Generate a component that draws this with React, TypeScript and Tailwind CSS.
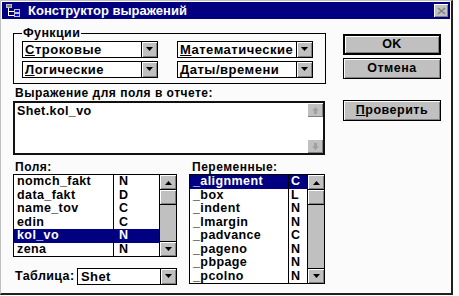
import React from "react";

const raised = "bg-[#c0c0c0] shadow-[inset_1px_1px_0_#ffffff,inset_-1px_-1px_0_#808080]";

function Down({ c = "#000" }: { c?: string }) {
  return (
    <svg width="9" height="5" viewBox="0 0 9 5"><path d="M1 0h7L4.5 4z" fill={c} /></svg>
  );
}
function Up({ c = "#000" }: { c?: string }) {
  return (
    <svg width="9" height="5" viewBox="0 0 9 5"><path d="M1 5h7L4.5 1z" fill={c} /></svg>
  );
}

function Combo({ u, rest, cls }: { u: string; rest: string; cls: string }) {
  return (
    <div className={`flex h-[17px] border border-black bg-white ${cls}`}>
      <div className="flex-1 pl-[2px] leading-[15px] text-[13px] font-bold tracking-[0.5px] text-black whitespace-nowrap overflow-hidden">
        <span className="underline">{u}</span>
        {rest}
      </div>
      <div className={`w-[16px] border-l border-black flex items-center justify-center ${raised}`}>
        <Down />
      </div>
    </div>
  );
}

function Btn({ children, cls }: { children: React.ReactNode; cls: string }) {
  return (
    <div className={`flex items-center justify-center border border-black text-[12.5px] font-bold tracking-[0.5px] text-black ${raised} ${cls}`}>
      {children}
    </div>
  );
}

type Row = [string, string];

function List({
  rows,
  sel,
  nameW,
  typeW,
  typePl,
  h,
}: {
  rows: Row[];
  sel: number;
  nameW: string;
  typeW: string;
  typePl: string;
  h: string;
}) {
  return (
    <div className={`flex border border-black bg-white ${h}`}>
      <div className={`${nameW} flex flex-col`}>
        {rows.map((r, i) => (
          <div
            key={i}
            className={`h-[13.5px] leading-[13.5px] pl-[3px] text-[12.5px] font-bold tracking-[0.4px] ${
              i === sel ? "bg-[#000080] text-white" : "text-black"
            }`}
          >
            {r[0]}
          </div>
        ))}
      </div>
      <div className={`${typeW} border-l border-black flex flex-col`}>
        {rows.map((r, i) => (
          <div
            key={i}
            className={`h-[13.5px] leading-[13.5px] ${typePl} text-[12.5px] font-bold ${
              i === sel ? "bg-[#000080] text-white" : "text-black"
            }`}
          >
            {r[1]}
          </div>
        ))}
      </div>
      <div className="w-[17px] border-l border-black bg-[#c0c0c0] flex flex-col">
        <div className={`h-[15px] flex items-center justify-center border-b border-black ${raised}`}>
          <Up />
        </div>
        <div className={`h-[15px] border-b border-black ${raised}`} />
        <div className="flex-1" />
        <div className={`h-[15px] flex items-center justify-center border-t border-black ${raised}`}>
          <Down />
        </div>
      </div>
    </div>
  );
}

export default function App() {
  const fields: Row[] = [
    ["nomch_fakt", "N"],
    ["data_fakt", "D"],
    ["name_tov", "C"],
    ["edin", "C"],
    ["kol_vo", "N"],
    ["zena", "N"],
  ];
  const vars: Row[] = [
    ["_alignment", "C"],
    ["_box", "L"],
    ["_indent", "N"],
    ["_lmargin", "N"],
    ["_padvance", "C"],
    ["_pageno", "N"],
    ["_pbpage", "N"],
    ["_pcolno", "N"],
  ];
  return (
    <div className="w-[459px] h-[296px] bg-white font-['Liberation_Sans',Arial,sans-serif]">
      <div className="w-[453px] h-[295px] bg-[#fbfbfb] border-l border-t border-l-[#c0c0c0] border-t-[#c0c0c0] border-r-2 border-b-2 border-r-[#202020] border-b-[#202020] flex flex-col">
        <div className="mx-[1px] mt-[1px] h-[17px] bg-[#000080] flex items-center">
          <svg width="16" height="14" viewBox="0 0 16 14" className="ml-[4px]">
            <rect x="0" y="0" width="6" height="4" fill="#c0c0c0" />
            <rect x="1" y="1" width="4" height="2" fill="#808080" />
            <rect x="2" y="4" width="1" height="8" fill="#ffffff" />
            <rect x="2" y="7" width="6" height="1" fill="#ffffff" />
            <rect x="2" y="11" width="6" height="1" fill="#ffffff" />
            <rect x="8" y="5" width="6" height="4" fill="#c0c0c0" />
            <rect x="9" y="6" width="4" height="2" fill="#0000ff" />
            <rect x="8" y="9" width="6" height="4" fill="#c0c0c0" />
            <rect x="9" y="10" width="4" height="2" fill="#0000ff" />
          </svg>
          <div className="ml-[6px] text-white text-[13px] font-bold tracking-[0px] leading-[17px]">
            Конструктор выражений
          </div>
          <div className="flex-1" />
          <div className={`mr-[2px] w-[14px] h-[13px] flex items-center justify-center ${raised}`}>
            <svg width="9" height="8" viewBox="0 0 9 8">
              <path d="M1 1l7 6M8 1L1 7" stroke="#808080" strokeWidth="1.5" />
            </svg>
          </div>
        </div>

        <div className="flex pl-[12px]">
          <div className="w-[313px] flex flex-col">
            <div className="relative mt-[14px] h-[51px] border border-black pt-[7px] pl-[8px] flex flex-col gap-[3px]">
              <div className="absolute -top-[8px] left-[8px] px-[1px] bg-[#fbfbfb] text-[12.5px] font-bold tracking-[0.4px] leading-[14px] text-black">
                Функции
              </div>
              <div className="flex gap-[19px]">
                <Combo u="С" rest="троковые" cls="w-[136px]" />
                <Combo u="М" rest="атематические" cls="w-[136px]" />
              </div>
              <div className="flex gap-[19px]">
                <Combo u="Л" rest="огические" cls="w-[136px]" />
                <Combo u="Д" rest="аты/времени" cls="w-[136px]" />
              </div>
            </div>
            <div className="mt-[3px] h-[13px] pl-[2px] text-[12px] font-bold tracking-[0.5px] leading-[13px] text-black">
              Выражение для поля в отчете:
            </div>
            <div className="mt-[1px] h-[54px] w-[312px] border-2 border-[#111] bg-white flex">
              <div className="flex-1 pl-[2px] pt-[1px] text-[12.5px] font-bold tracking-[0.4px] leading-[15px] text-black">
                Shet.kol_vo
              </div>
              <div className="w-[16px] flex flex-col">
                <div className={`h-[14px] flex items-center justify-center ${raised}`}>
                  <svg width="7" height="7" viewBox="0 0 7 7"><path d="M3.5 0L7 3.5H5V7H2V3.5H0z" fill="#a0a0a0" /></svg>
                </div>
                <div className="flex-1 bg-white" />
                <div className={`h-[14px] flex items-center justify-center ${raised}`}>
                  <svg width="7" height="7" viewBox="0 0 7 7"><path d="M3.5 7L7 3.5H5V0H2V3.5H0z" fill="#a0a0a0" /></svg>
                </div>
              </div>
            </div>

            <div className="mt-[6px] flex">
              <div className="w-[164px] flex flex-col">
                <div className="h-[13px] pl-[2px] text-[12px] font-bold tracking-[0.5px] leading-[13px] text-black">
                  Поля:
                </div>
                <List rows={fields} sel={4} nameW="w-[99px]" typeW="w-[46px]" typePl="pl-[5px]" h="h-[83px]" />
                <div className="mt-[10px] flex items-center">
                  <div className="w-[64px] pl-[2px] text-[12.5px] font-bold tracking-[0.4px] text-black">Таблица:</div>
                  <div className="flex h-[17px] w-[100px] border border-black bg-white">
                    <div className="flex-1 pl-[3px] leading-[15px] text-[13px] font-bold tracking-[0.4px] text-black">
                      Shet
                    </div>
                    <div className={`w-[16px] border-l border-black flex items-center justify-center ${raised}`}>
                      <Down />
                    </div>
                  </div>
                </div>
              </div>
              <div className="ml-[12px] w-[136px] flex flex-col">
                <div className="h-[13px] pl-[3px] text-[12px] font-bold tracking-[0.5px] leading-[13px] text-black">
                  Переменные:
                </div>
                <List rows={vars} sel={0} nameW="w-[98px]" typeW="w-[19px]" typePl="pl-[2px]" h="h-[110px]" />
              </div>
            </div>
          </div>

          <div className="ml-[17px] w-[98px] flex flex-col">
            <Btn cls="mt-[15px] h-[21px] border-2">OK</Btn>
            <Btn cls="mt-[3px] h-[21px]">Отмена</Btn>
            <Btn cls="mt-[21px] h-[21px]">
              <span className="underline">П</span>роверить
            </Btn>
          </div>
        </div>
      </div>
    </div>
  );
}
